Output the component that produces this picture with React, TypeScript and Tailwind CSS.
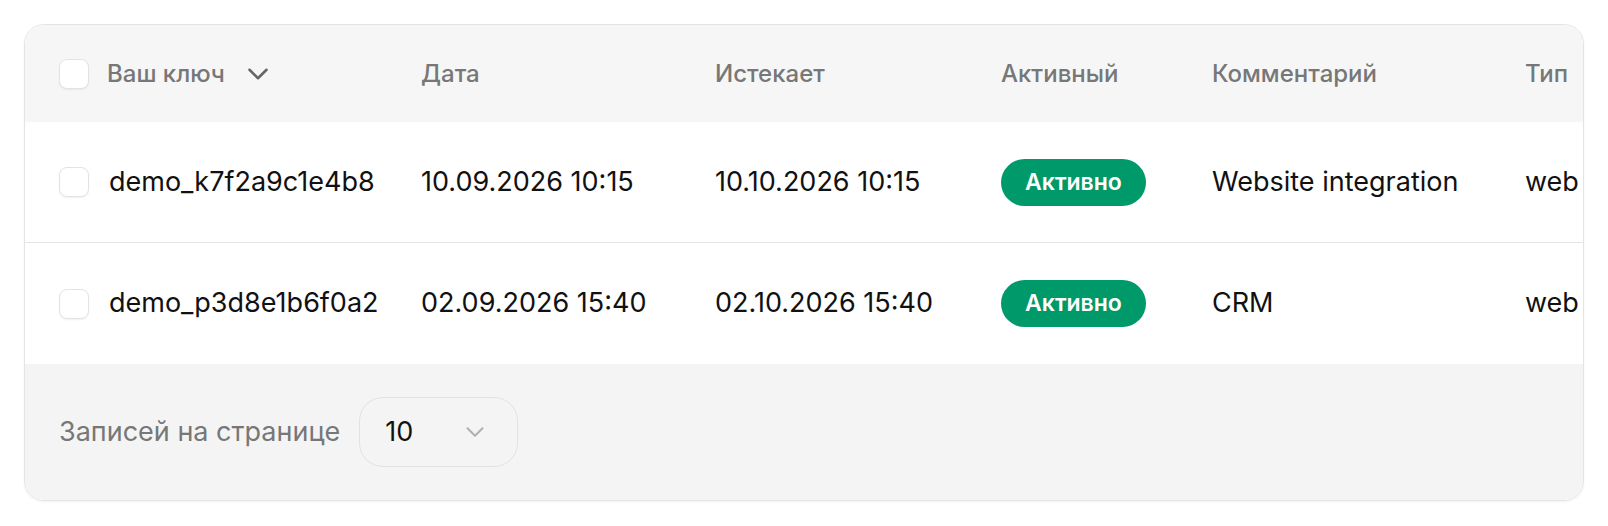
import React from 'react';

type Row = {
  key: string;
  created: string;
  expires: string;
  comment: string;
  type: string;
};

const rows: Row[] = [
  { key: 'demo_k7f2a9c1e4b8', created: '10.09.2026 10:15', expires: '10.10.2026 10:15', comment: 'Website integration', type: 'web' },
  { key: 'demo_p3d8e1b6f0a2', created: '02.09.2026 15:40', expires: '02.10.2026 15:40', comment: 'CRM', type: 'web' },
];

// ширины колонок подобраны по макету
const cols = 'grid grid-cols-[396px_294px_286px_211px_313px_120px]';

const Checkbox: React.FC = () => (
  <span className="block h-[30px] w-[30px] shrink-0 rounded-[8px] border border-[#e3e3e3] bg-white shadow-[0_1px_2px_rgba(0,0,0,0.06)]" />
);

const Chevron: React.FC<{ className?: string; sw?: number }> = ({ className, sw = 1.6 }) => (
  <svg viewBox="0 0 24 24" fill="none" stroke="currentColor" strokeWidth={sw} strokeLinecap="round" strokeLinejoin="round" className={className}>
    <path d="m6 9 6 6 6-6" />
  </svg>
);

export default function App(): JSX.Element {
  return (
    <div className="min-h-screen bg-white p-[24px] font-['Inter','Noto_Sans',sans-serif]">
      <div className="overflow-hidden rounded-[20px] border border-[#e4e4e4] shadow-[0_1px_3px_rgba(0,0,0,0.05)]">
        {/* header */}
        <div className={`${cols} h-[97px] items-center bg-[#f6f6f6] text-[24px] font-medium text-[#777]`}>
          <div className="flex items-center pl-[34px]">
            <Checkbox />
            <span className="ml-[18px]">Ваш ключ</span>
            <Chevron sw={1.8} className="ml-[16px] h-[34px] w-[34px] text-[#666]" />
          </div>
          <div>Дата</div>
          <div>Истекает</div>
          <div>Активный</div>
          <div>Комментарий</div>
          <div>Тип</div>
        </div>

        {/* rows */}
        {rows.map((r, i) => (
          <div
            key={r.key}
            className={`${cols} h-[121px] items-center bg-white text-[27px] text-[#111] ${i === 0 ? 'border-b border-[#e4e4e4]' : ''}`}
          >
            <div className="flex items-center pl-[34px]">
              <Checkbox />
              <span className="ml-[20px]">{r.key}</span>
            </div>
            <div>{r.created}</div>
            <div>{r.expires}</div>
            <div>
              <span className="inline-flex h-[47px] w-[145px] items-center justify-center rounded-full bg-[#00996a] text-[23px] font-semibold text-white">
                Активно
              </span>
            </div>
            <div>{r.comment}</div>
            <div>{r.type}</div>
          </div>
        ))}

        {/* footer */}
        <div className="flex h-[136px] items-center bg-[#f4f4f4] pl-[34px]">
          <span className="text-[27px] text-[#777]">Записей на странице</span>
          <div className="ml-[19px] flex h-[70px] w-[159px] items-center rounded-[24px] border border-[#e2e2e2] pl-[25px] pr-[27px]">
            <span className="text-[27px] text-[#111]">10</span>
            <Chevron sw={1.6} className="ml-auto h-[30px] w-[30px] text-[#b0b0b0]" />
          </div>
        </div>
      </div>
    </div>
  );
}
